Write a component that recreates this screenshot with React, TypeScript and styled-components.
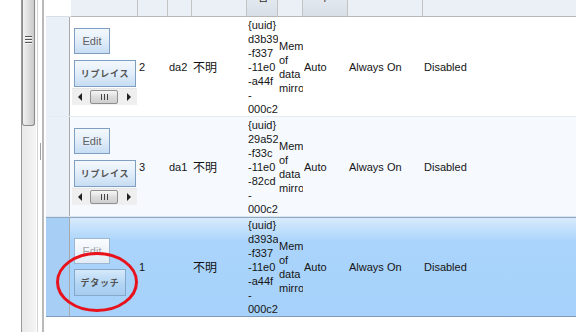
import React from "react";
import styled, { createGlobalStyle, css } from "styled-components";

const COLS = "24px 68px 30px 24px 55px 31px 25px 45px 75px 1fr";

const GlobalStyle = createGlobalStyle`
  html, body {
    margin: 0;
    padding: 0;
    background: #fff;
    overflow: hidden;
  }
  body {
    font-family: "Liberation Sans", Arial, sans-serif;
    font-size: 11px;
    color: #151515;
  }
`;

const Page = styled.div`
  position: relative;
  display: flex;
  width: 576px;
  height: 332px;
  overflow: hidden;
  background: #fff;
`;

const LeftPane = styled.div`
  width: 21px;
  flex: none;
`;

const VScroll = styled.div`
  width: 14px;
  flex: none;
  border-left: 1px solid #9a9a9a;
  background: linear-gradient(to right, #e9e9e9, #f4f4f4);
  display: flex;
  flex-direction: column;
`;

const VThumb = styled.div`
  height: 126px;
  box-sizing: border-box;
  margin-right: 1px;
  border: 1px solid #8c8c8c;
  border-top: none;
  border-radius: 0 0 3px 3px;
  background: linear-gradient(to right, #f1f1f1, #dcdcdc 55%, #cacaca);
  display: flex;
  flex-direction: column;
  align-items: center;
  padding-top: 36px;
  gap: 2px;
`;

const GripLine = styled.div`
  width: 7px;
  height: 1px;
  background: #555;
  box-shadow: 0 1px 0 #fafafa;
`;

const Splitter = styled.div`
  width: 4px;
  flex: none;
  margin-left: 1px;
  border-left: 1px solid #d4d4d4;
  border-right: 2px solid #b9b9b9;
  display: flex;
  justify-content: center;
  padding-top: 143px;
`;

const SplitGrip = styled.div`
  width: 1px;
  height: 17px;
  background: #a0a0a0;
`;

const Grid = styled.div`
  flex: 1;
  display: flex;
  flex-direction: column;
  padding-left: 2px;
  min-width: 0;
`;

const HeaderRow = styled.div`
  display: grid;
  grid-template-columns: ${COLS};
  height: 17px;
`;

const HeaderCell = styled.div<{ $sorted?: boolean; $corner?: boolean; $first?: boolean; $last?: boolean }>`
  box-sizing: border-box;
  overflow: hidden;
  display: flex;
  justify-content: center;
  background: #ebeff6;
  border-right: 1px solid #c3c3c3;
  border-bottom: 1px solid #b7b7b7;
  ${(p) =>
    p.$sorted &&
    css`
      background: linear-gradient(to bottom, #e3e8ee, #d8dfe7);
    `}
  ${(p) =>
    p.$first &&
    css`
      border-left: 1px solid #fff;
    `}
  ${(p) =>
    p.$last &&
    css`
      border-right: none;
    `}
  ${(p) =>
    p.$corner &&
    css`
      background: #fff;
      border-right: 1px solid #fff;
      border-bottom: 1px solid #d9dee6;
    `}
`;

const HeaderLabel = styled.span`
  font-family: "Noto Sans CJK JP", sans-serif;
  font-size: 12px;
  line-height: 14px;
  margin-top: -11px;
  color: #333;
`;

type Variant = "plain" | "alt" | "selected";

const Row = styled.div<{ $variant: Variant }>`
  display: grid;
  grid-template-columns: ${COLS};
  height: 100px;
  box-sizing: border-box;
  border-bottom: 1px solid #e4ebf3;
  background: #fff;
  ${(p) =>
    p.$variant === "alt" &&
    css`
      background: linear-gradient(to right, transparent 24px, #f6faff 24px);
      border-bottom-color: #dce5ee;
    `}
  ${(p) =>
    p.$variant === "selected" &&
    css`
      background: linear-gradient(to bottom, #d8ebfd 0%, #aad4fb 24%, #a6d1fa 100%);
      border-top: 1px solid #8ea9c6;
      border-bottom: 1px solid #7f9db9;
    `}
`;

const RowHead = styled.div<{ $selected?: boolean }>`
  background: ${(p) => (p.$selected ? "#a7cff6" : "#eaf0f8")};
  border-right: 1px solid #a9a9a9;
`;

const Cell = styled.div`
  overflow: hidden;
  display: flex;
  align-items: center;
  padding-left: 1px;
  white-space: nowrap;
  line-height: 14px;
`;

const JpCell = styled(Cell)`
  font-family: "Noto Sans CJK JP", sans-serif;
  font-size: 12px;
  color: #111;
`;

const Lines = styled.div`
  display: flex;
  flex-direction: column;
  line-height: 14px;
`;

const ActionCell = styled.div`
  overflow: hidden;
  display: flex;
  flex-direction: column;
  justify-content: center;
  padding-left: 2px;
`;

const ActionButton = styled.button<{ $w: number; $tone?: "normal" | "faded" | "active"; $jp?: boolean }>`
  box-sizing: border-box;
  width: ${(p) => p.$w}px;
  height: 26px;
  margin: 0 0 0 2px;
  padding: 0;
  border: 1px solid #7f9fc2;
  background: linear-gradient(to bottom, #f4f8fd 0%, #e6f0fa 40%, #c7ddf3 100%);
  color: #606060;
  font-family: "Liberation Sans", Arial, sans-serif;
  font-size: 11px;
  text-align: center;
  ${(p) =>
    p.$jp &&
    css`
      height: 27px;
      font-family: "Noto Sans CJK JP", sans-serif;
      font-size: 9px;
      font-weight: 700;
      letter-spacing: 0.8px;
      color: #525252;
    `}
  ${(p) =>
    p.$tone === "faded" &&
    css`
      border-color: #9db7d2;
      background: linear-gradient(to bottom, #fafcfe, #e2ecf6);
      color: #a3a3a3;
    `}
  ${(p) =>
    p.$tone === "active" &&
    css`
      border-color: #88a8c8;
      background: linear-gradient(to bottom, #d6e9fb, #b0d4f4 60%, #a6ccef);
    `}
`;

const HScroll = styled.div`
  display: flex;
  align-items: center;
  width: 65px;
  height: 17px;
  margin-top: 1px;
  background: #efefef;
  border-top: 1px solid #e6e6e6;
  box-sizing: border-box;
`;

const Arrow = styled.div<{ $dir: "left" | "right" }>`
  width: 16px;
  flex: none;
  display: flex;
  justify-content: center;
  &::before {
    content: "";
    border-top: 4px solid transparent;
    border-bottom: 4px solid transparent;
    ${(p) =>
      p.$dir === "left"
        ? css`border-right: 4px solid #222;`
        : css`border-left: 4px solid #222;`}
  }
`;

const HThumb = styled.div`
  width: 28px;
  height: 14px;
  margin-left: 2px;
  box-sizing: border-box;
  border: 1px solid #8f8f8f;
  border-radius: 2px;
  background: linear-gradient(to bottom, #f6f6f6, #dadada 55%, #cfcfcf);
  display: flex;
  justify-content: center;
  align-items: center;
  gap: 2px;
  margin-right: auto;
`;

const ThumbTick = styled.div`
  width: 1px;
  height: 6px;
  background: #444;
`;

const Annotation = styled.svg`
  position: absolute;
  left: 55px;
  top: 251px;
  pointer-events: none;
`;

type Item = {
  id: string;
  name: string;
  uuid: string[];
  selected?: boolean;
};

const items: Item[] = [
  { id: "2", name: "da2", uuid: ["{uuid}", "d3b39", "-f337", "-11e0", "-a44f", "-", "000c29"] },
  { id: "3", name: "da1", uuid: ["{uuid}", "29a52", "-f33c", "-11e0", "-82cd", "-", "000c29"] },
  { id: "1", name: "", uuid: ["{uuid}", "d393a", "-f337", "-11e0", "-a44f", "-", "000c29"], selected: true },
];

const desc = ["Memory", "of", "data", "mirroring"];

function MiniScroll() {
  return (
    <HScroll>
      <Arrow $dir="left" />
      <HThumb>
        <ThumbTick />
        <ThumbTick />
        <ThumbTick />
      </HThumb>
      <Arrow $dir="right" />
    </HScroll>
  );
}

function App() {
  return (
    <Page>
      <GlobalStyle />
      <LeftPane />
      <VScroll>
        <VThumb>
          <GripLine />
          <GripLine />
          <GripLine />
        </VThumb>
      </VScroll>
      <Splitter>
        <SplitGrip />
      </Splitter>
      <Grid>
        <HeaderRow>
          <HeaderCell $corner />
          <HeaderCell $first />
          <HeaderCell />
          <HeaderCell />
          <HeaderCell />
          <HeaderCell $sorted>
            <HeaderLabel>名</HeaderLabel>
          </HeaderCell>
          <HeaderCell />
          <HeaderCell $sorted>
            <HeaderLabel>卞</HeaderLabel>
          </HeaderCell>
          <HeaderCell />
          <HeaderCell $last />
        </HeaderRow>
        {items.map((it, i) => (
          <Row key={it.id} $variant={it.selected ? "selected" : i % 2 ? "alt" : "plain"}>
            <RowHead $selected={it.selected} />
            <ActionCell>
              {it.selected ? (
                <>
                  <ActionButton $w={36} $tone="faded">Edit</ActionButton>
                  <ActionButton $w={52} $jp $tone="active" style={{ marginTop: 5 }}>
                    デタッチ
                  </ActionButton>
                </>
              ) : (
                <>
                  <ActionButton $w={36}>Edit</ActionButton>
                  <ActionButton $w={62} $jp style={{ marginTop: 6 }}>
                    リプレイス
                  </ActionButton>
                  <MiniScroll />
                </>
              )}
            </ActionCell>
            <Cell>{it.id}</Cell>
            <Cell>{it.name}</Cell>
            <JpCell>不明</JpCell>
            <Cell>
              <Lines>
                {it.uuid.map((l, j) => (
                  <span key={j}>{l}</span>
                ))}
              </Lines>
            </Cell>
            <Cell>
              <Lines>
                {desc.map((l) => (
                  <span key={l}>{l}</span>
                ))}
              </Lines>
            </Cell>
            <Cell>Auto</Cell>
            <Cell>Always On</Cell>
            <Cell>Disabled</Cell>
          </Row>
        ))}
      </Grid>
      <Annotation width="84" height="62" viewBox="0 0 84 62">
        <ellipse cx="42" cy="31" rx="39.5" ry="28.5" fill="none" stroke="#e8121c" strokeWidth="3" />
      </Annotation>
    </Page>
  );
}

export default App;
